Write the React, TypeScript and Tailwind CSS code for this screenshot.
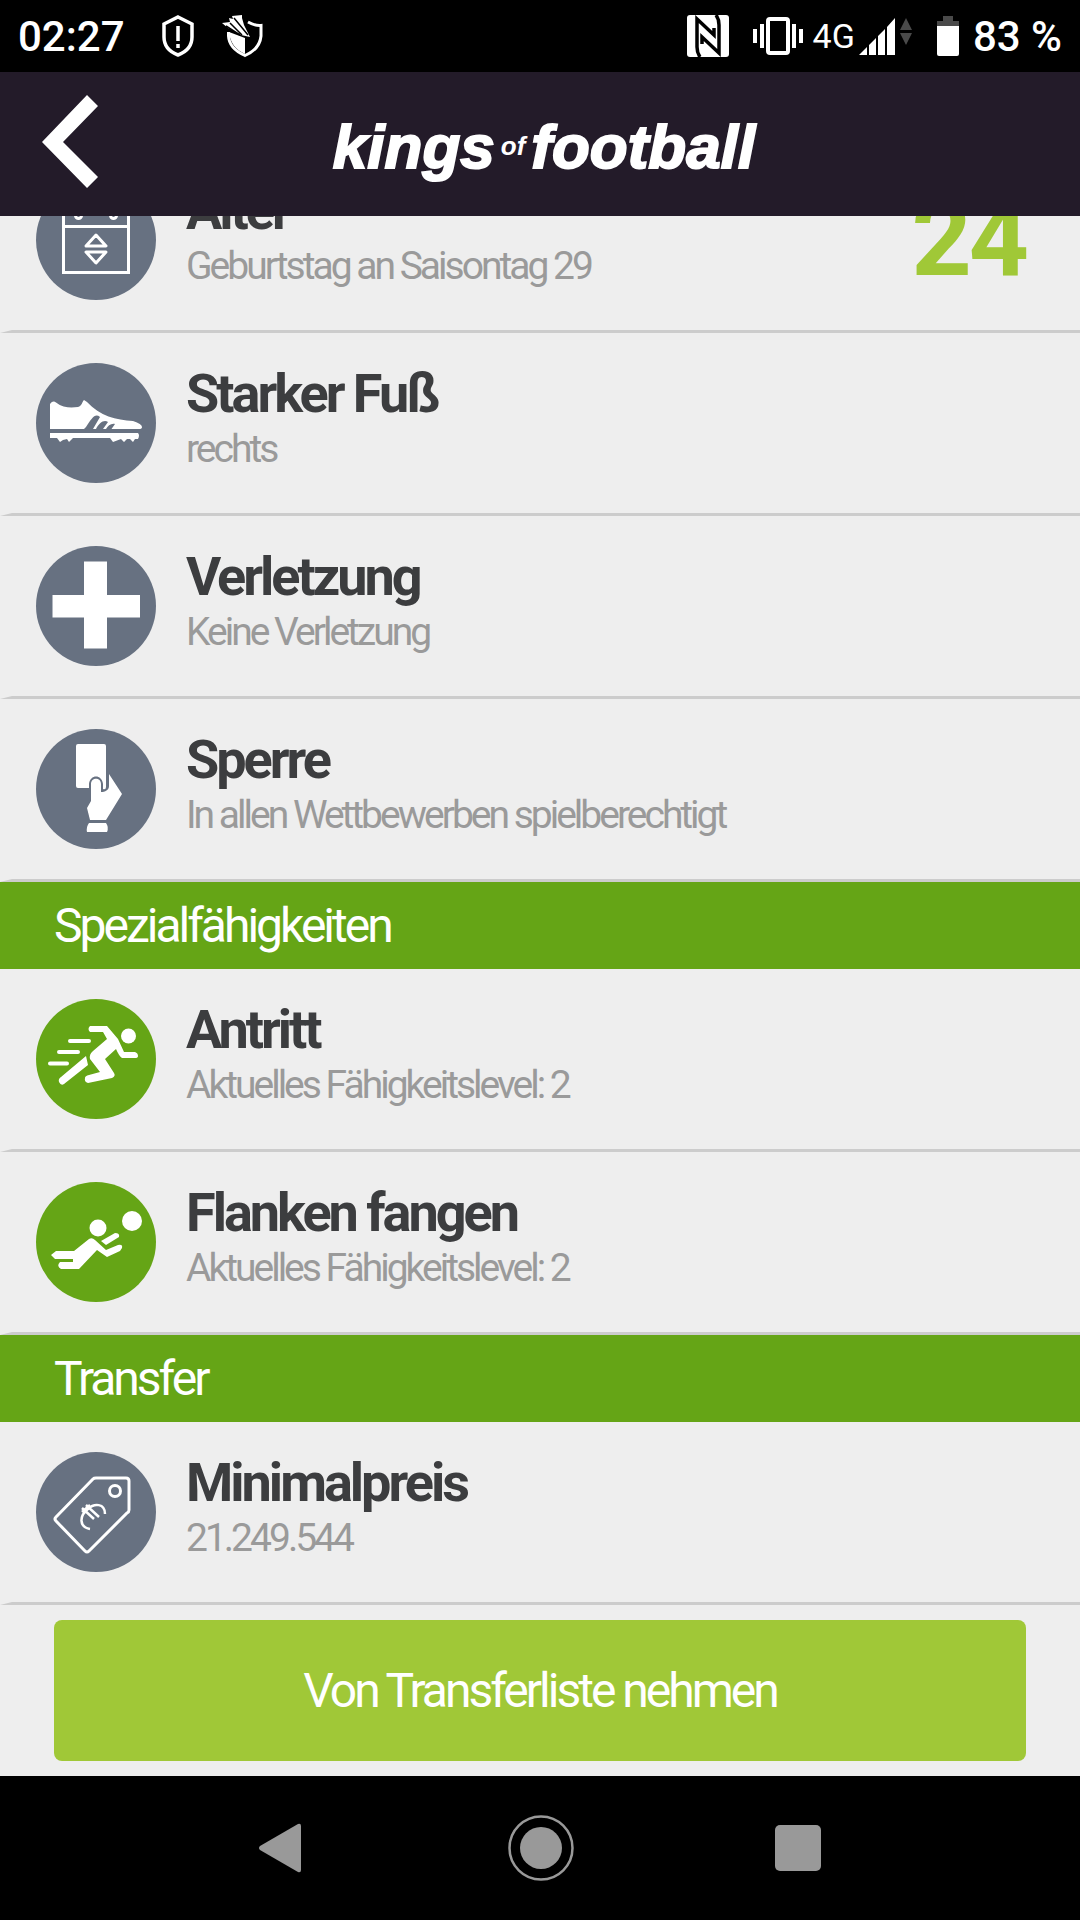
import { ReactNode } from 'react';

type Tone = 'slate' | 'green';

const badgeTones: Record<Tone, string> = {
  slate: 'bg-[#677181]',
  green: 'bg-[#65a516]'
};

const ShoeIcon = () => (
  <svg viewBox="0 0 120 120" className="size-[120px]" fill="#fff">
    <path d="M14 41Q17 37 20 39.500C27 45 35 45 42 44C46 43 46 39 48 37L51 39C64 53 80 57 97 58Q106 61 106 64Q106 66 103 66H75.500L79 61C75 60 72 63 70 66H67L72 59C68 56 63 60 60 66H57L64 54C59 50 56 55 50 64L48 66H14Z" />
    <path d="M14 70H102Q104 72 102 76L99 76L97 79L94 76L91 76L88 79L85 76L77 79L74 75H37L33 79L31 76L27 77L24 79L21 75H14Z" />
  </svg>
);

const CrossIcon = () => (
  <svg viewBox="0 0 120 120" className="size-[120px]" fill="#fff">
    <path d="M48 15.500h23v33.500h33v22.500H71v31H48v-31H16.500V49H48z" />
  </svg>
);

const CardHandIcon = () => (
  <svg viewBox="0 0 120 120" className="size-[120px]" fill="#fff">
    <path d="M42 15H68Q70 15 70 17V58Q70 61 67 60V55C66 45 54 45 53 55V59H42Q40 59 40 57V17Q40 15 42 15Z" />
    <path d="M55 55C55 48 65 48 65 55V63C69 63 73 61 73 57V45L86 65L70 91H54L51 79L55 72Z" />
    <path d="M53 94H70Q73 98 71 103H51Q50 98 53 94Z" />
  </svg>
);

const SprintIcon = () => (
  <svg viewBox="0 0 120 120" className="size-[120px]" fill="#fff">
    <circle cx="92.500" cy="37" r="7.500" />
    <path d="M54 27H71L82 40L88 53H99Q102 54 102 57Q102 59 99 59H86Q83 57 80 50L69 60L78 74Q80 77 76 79L52 84Q48 83 49 79Q49 77 53 76L64 73L54 60Q53 55 57 52L71 40L67 33H54Q51 30 54 27Z" />
    <path d="M50 57L52 66L28 85Q25 87 23 83Q22 80 25 78Z" />
    <path d="M34 42H53M23 53H42M14 64.500H31" stroke="#fff" strokeWidth="4" strokeLinecap="round" />
  </svg>
);

const KeeperIcon = () => (
  <svg viewBox="0 0 120 120" className="size-[120px]" fill="#fff">
    <circle cx="96" cy="39" r="10" />
    <circle cx="62" cy="46" r="8.500" />
    <path d="M15 73L20 69H38L53 57Q56 55 59 58L70 68L82 63Q87 62 86 66L84 69L71 75L61 68L43 87H25Q20 84 24 80H37V77H19Z" />
    <path d="M65 59L79 51Q84 51 83 55L70 63Z" />
  </svg>
);

const PriceTagIcon = () => (
  <svg viewBox="0 0 120 120" className="size-[120px]" fill="none" stroke="#fff" strokeWidth="3">
    <path d="M60 26H90Q93 26 93 29V58Q93 60 91 61L53 99Q51 101 49 99L20 69Q18 67 20 65L57 27Q58 26 60 26Z" />
    <circle cx="79" cy="39" r="5.500" />
    <path d="M69 62C69 51 58 51 52 57C43 64 43 75 54 77M46 56L58 67M50 53L63 65M46 60L54 53" strokeWidth="2.500" />
  </svg>
);

const CalendarIcon = () => (
  <svg viewBox="0 0 120 120" className="size-[120px]" fill="none" stroke="#fff" strokeWidth="3">
    <path d="M27.500 24H92.500V92.500H27.500ZM27.500 46.500H92.500" />
    <circle cx="42.500" cy="35.500" r="3" />
    <circle cx="77.500" cy="35.500" r="3" />
    <path d="M60 55L70 66H50ZM60 83L50 72H70Z" strokeLinejoin="round" />
  </svg>
);

const StatusBar = () => (
  <div className="flex h-18 items-center justify-between bg-black px-[18px] font-medium text-white">
    <div className="flex items-center">
      <span className="w-36 text-[42px]">02:27</span>
      <svg viewBox="0 0 32 44" className="mr-7 h-11 w-8" fill="none" stroke="#fff" strokeWidth="3.500">
        <path d="M16 3L30 10V23C30 32 24 38 16 41C8 38 2 32 2 23V10Z" />
        <path d="M16 12V27M16 30V34" />
      </svg>
      <svg viewBox="0 0 42 44" className="h-11 w-[42px]" fill="none" stroke="#fff">
        <path d="M26 8Q33 12 39 11.500V22C38 33 31 38 23 41.500C15 38 7 32 6.500 22V18" strokeWidth="3" />
        <path d="M7 18L23 24V40C14 36 8 29 7 18Z" fill="#fff" stroke="none" />
        <path d="M0 9L8 8L7 4L11 5L10 2L20 1V4L22 11L28 23L19 21L6 14Z" fill="#fff" stroke="none" />
        <path d="M8 9L20 21M12 4L26 21M4 12L18 21" stroke="#000" strokeWidth="1.500" />
      </svg>
    </div>
    <div className="flex items-center">
      <svg viewBox="0 0 42 42" className="mr-6 size-[42px]">
        <rect width="42" height="42" rx="3" fill="#fff" />
        <path
          d="M13 42Q10 38 10 32V4L27 20V13M29 0Q32 4 32 10V38L15 22V29"
          fill="none"
          stroke="#000"
          strokeWidth="3.500"
        />
      </svg>
      <svg viewBox="0 0 50 38" className="mr-2.5 h-[38px] w-[50px]" fill="none" stroke="#fff" strokeWidth="4">
        <rect x="15" y="2" width="20" height="34" rx="2" />
        <path d="M9 7V31M2 12V26M41 7V31M48 12V26" />
      </svg>
      <span className="mr-1 text-[34px] font-normal">4G</span>
      <svg viewBox="0 0 54 38" className="mr-6 h-[38px] w-[54px]" fill="#fff">
        <path d="M0 38L8 30V38ZM10 28L17 21V38H10ZM19 19L26 12V38H19ZM28 10L36 1V38H28Z" />
        <path d="M47 1L53 13H41ZM41 16H53L47 28Z" fill="#4a4a4a" />
      </svg>
      <svg viewBox="0 0 22 40" className="mr-3.5 h-10 w-[22px]">
        <path d="M6 0H16V5H22V11H0V5H6Z" fill="#4a4a4a" />
        <path d="M0 10H22V38Q22 40 20 40H2Q0 40 0 38Z" fill="#fff" />
      </svg>
      <span className="text-[42px]">83 %</span>
    </div>
  </div>
);

const Header = () => (
  <header className="grid h-36 grid-cols-[1fr_auto_1fr] items-center bg-[#231b29] text-white">
    <button type="button" aria-label="Zurück" className="ml-[42px] w-14 pb-1.5">
      <svg viewBox="0 0 56 93" className="h-[93px] w-14" fill="#fff">
        <path d="M45 0L56 11L21 47L56 82L45 93L0 47Z" />
      </svg>
    </button>
    <h1 className="flex items-center pt-1 pl-2 font-['Liberation_Sans',sans-serif] font-bold italic">
      <span className="text-[62px] [-webkit-text-stroke:2px_#fff]">kings</span>
      <span className="mx-1.5 text-[26px]">of</span>
      <span className="text-[62px] [-webkit-text-stroke:2px_#fff]">football</span>
    </h1>
  </header>
);

type RowProps = {
  icon: ReactNode;
  title: string;
  text: string;
  tone?: Tone;
  value?: string;
};

const Row = ({ icon, title, text, tone = 'slate', value }: RowProps) => (
  <li className="flex h-[183px] items-center border-b-[3px] border-l-[12px] border-b-[#cccccc] border-l-transparent pr-[54px] pl-6">
    <span className={`mr-[30px] size-[120px] shrink-0 overflow-hidden rounded-full ${badgeTones[tone]}`}>{icon}</span>
    <div className="flex-1 pb-2">
      <h3 className="text-[54px] leading-[60px] font-bold text-[#3c3d3f]">{title}</h3>
      <p className="text-[39px] leading-[50px] text-[#9a9a9a]">{text}</p>
    </div>
    {value && <strong className="text-[105px] leading-[120px] font-bold text-[#a0c837]">{value}</strong>}
  </li>
);

const SectionTitle = ({ children }: { children: ReactNode }) => (
  <h2 className="flex h-[87px] items-center bg-[#65a516] px-[54px] text-[48px] text-white">{children}</h2>
);

const SystemNav = () => (
  <nav className="flex h-36 items-center justify-between bg-black px-[24%]">
    <button type="button" aria-label="Zurück" className="w-12">
      <svg viewBox="0 0 44 50" className="h-[50px] w-11" fill="#999">
        <path d="M39 1Q42 0 42 3V47Q42 50 39 49L1 27Q-1 25 1 23Z" />
      </svg>
    </button>
    <button type="button" aria-label="Startseite">
      <svg viewBox="0 0 66 66" className="size-[66px]">
        <circle cx="33" cy="33" r="31.500" fill="none" stroke="#999" strokeWidth="2.500" />
        <circle cx="33" cy="33" r="21" fill="#999" />
      </svg>
    </button>
    <button type="button" aria-label="Letzte Apps">
      <span className="block size-[46px] rounded-[5px] bg-[#999]" />
    </button>
  </nav>
);

const App = () => (
  <div className="flex min-h-screen flex-col bg-[#eeeeee] font-['Roboto',sans-serif]">
    <StatusBar />
    <Header />
    <main className="flex-1 overflow-hidden tracking-[-3px]">
      <ul className="-mt-[66px]">
        <Row icon={<CalendarIcon />} title="Alter" text="Geburtstag an Saisontag 29" value="24" />
        <Row icon={<ShoeIcon />} title="Starker Fuß" text="rechts" />
        <Row icon={<CrossIcon />} title="Verletzung" text="Keine Verletzung" />
        <Row icon={<CardHandIcon />} title="Sperre" text="In allen Wettbewerben spielberechtigt" />
      </ul>
      <SectionTitle>Spezialfähigkeiten</SectionTitle>
      <ul>
        <Row icon={<SprintIcon />} tone="green" title="Antritt" text="Aktuelles Fähigkeitslevel: 2" />
        <Row icon={<KeeperIcon />} tone="green" title="Flanken fangen" text="Aktuelles Fähigkeitslevel: 2" />
      </ul>
      <SectionTitle>Transfer</SectionTitle>
      <ul>
        <Row icon={<PriceTagIcon />} title="Minimalpreis" text="21.249.544" />
      </ul>
      <div className="px-[54px] py-[15px]">
        <button type="button" className="h-[141px] w-full rounded-lg bg-[#a0c837] text-[48px] text-white">
          Von Transferliste nehmen
        </button>
      </div>
    </main>
    <SystemNav />
  </div>
);

export default App;
